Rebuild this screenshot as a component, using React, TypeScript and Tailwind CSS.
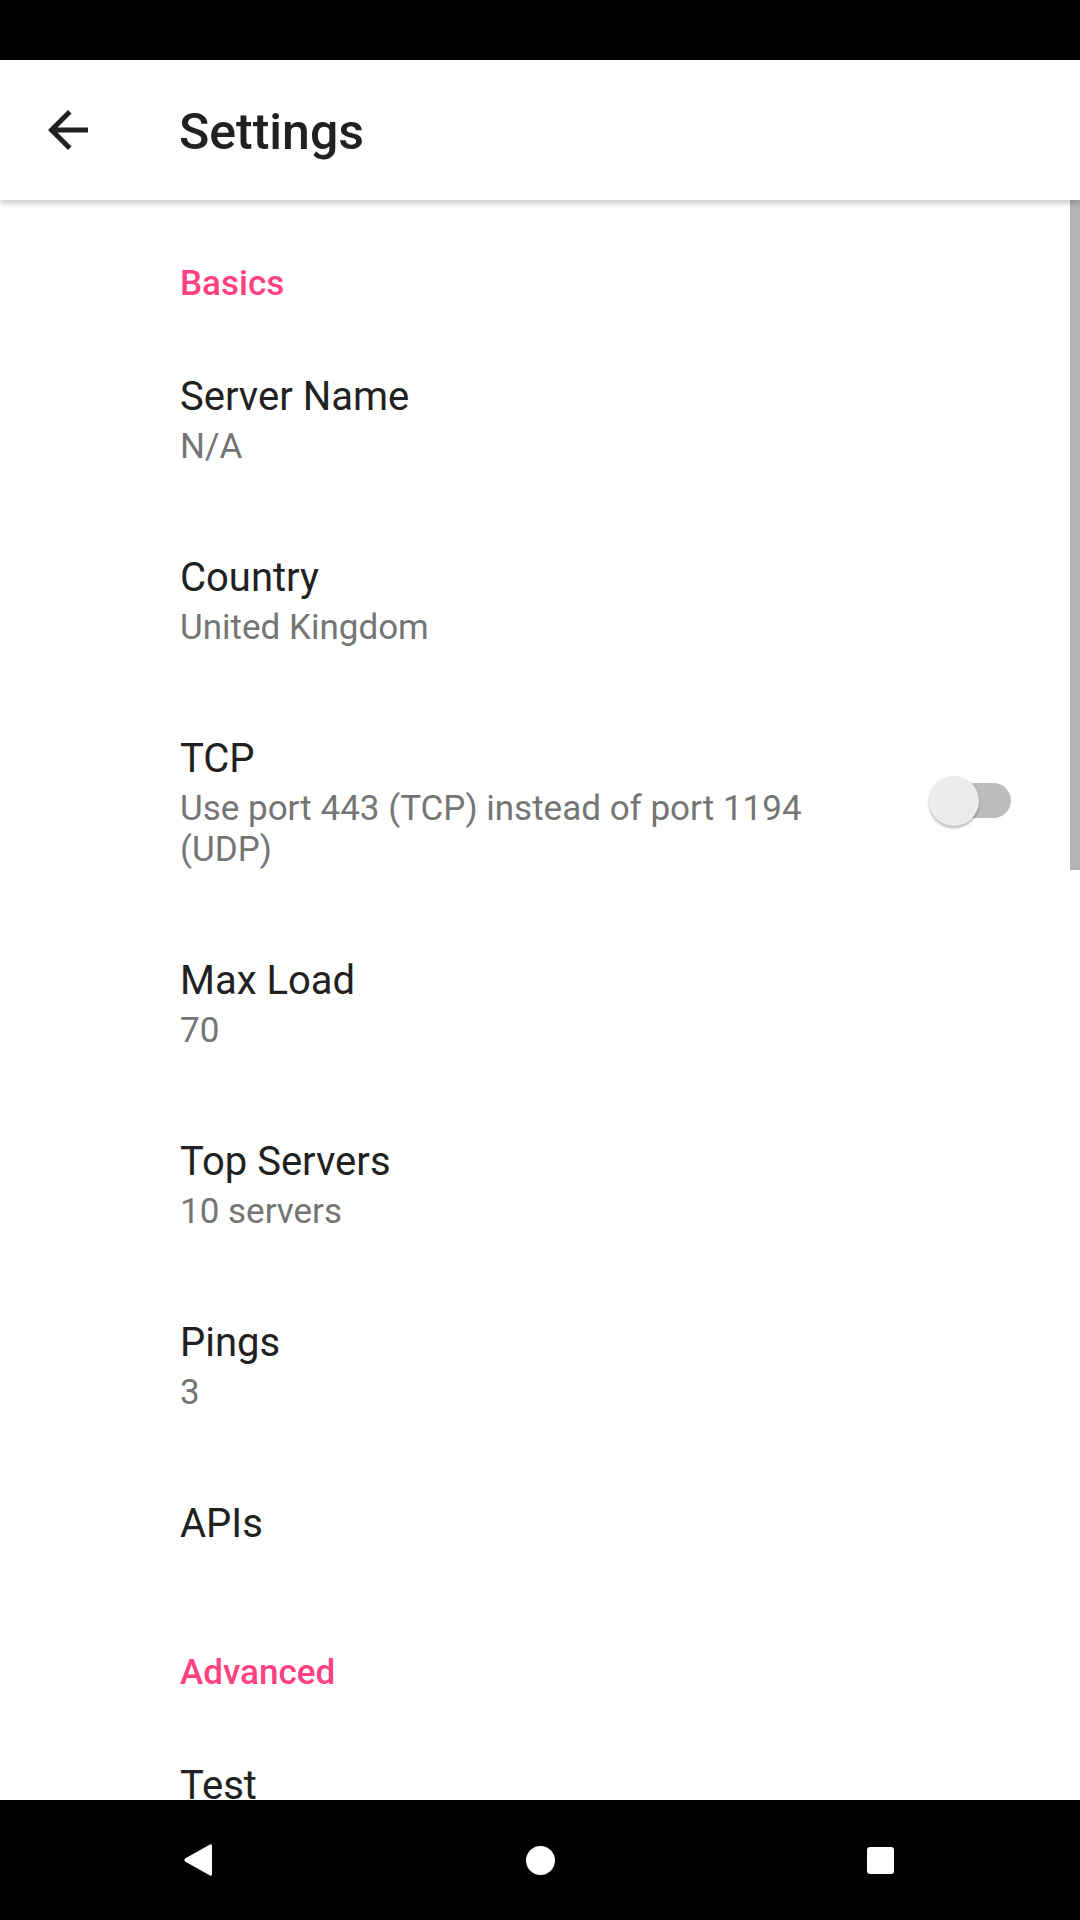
import React from "react"

type Pref = { title: string; summary?: string; toggle?: boolean }

const basics: Pref[] = [
    { title: "Server Name", summary: "N/A" },
    { title: "Country", summary: "United Kingdom" },
    { title: "TCP", summary: "Use port 443 (TCP) instead of port 1194 (UDP)", toggle: true },
    { title: "Max Load", summary: "70" },
    { title: "Top Servers", summary: "10 servers" },
    { title: "Pings", summary: "3" },
]

function Toggle() {
    return (
        <div className="relative w-[85px] h-[50px] mb-[4px] shrink-0 flex items-center">
            <div className="absolute left-[7px] w-[75px] h-[35px] rounded-full bg-[#bdbdbd]" />
            <div className="absolute left-0 w-[50px] h-[50px] rounded-full bg-[#ececec] shadow-[0_2px_3px_rgba(0,0,0,0.3)]" />
        </div>
    )
}

function Row({ pref }: { pref: Pref }) {
    return (
        <div className="flex items-center pl-[180px] pr-[66px] pt-[45px] pb-[42px]">
            <div className="w-[700px]">
                <div className="text-[40px] leading-[47px] text-[#212121]">{pref.title}</div>
                {pref.summary && (
                    <div className="mt-[6px] text-[35px] leading-[41px] text-[#757575]">{pref.summary}</div>
                )}
            </div>
            <div className="flex-1" />
            {pref.toggle && <Toggle />}
        </div>
    )
}

function Category({ label, top }: { label: string; top: string }) {
    return (
        <div className={`pl-[180px] pb-[24px] text-[35px] leading-[41px] font-medium text-[#ff4081] ${top}`}>
            {label}
        </div>
    )
}

export default function App() {
    return (
        <div className="w-[1080px] h-[1920px] flex flex-col bg-white overflow-hidden" style={{ fontFamily: "Roboto, sans-serif" }}>
            <div className="h-[60px] bg-black shrink-0" />
            <div className="relative z-10 h-[140px] shrink-0 bg-white flex items-center shadow-[0_3px_6px_rgba(0,0,0,0.22)]">
                <svg className="ml-[38px] w-[60px] h-[60px]" viewBox="0 0 24 24" fill="#212121">
                    <path d="M20 11H7.83l5.59-5.59L12 4l-8 8 8 8 1.41-1.41L7.83 13H20v-2z" />
                </svg>
                <div className="ml-[81px] pt-[4px] text-[50px] leading-[59px] font-medium text-[#212121]">Settings</div>
            </div>
            <div className="relative flex-1 overflow-hidden">
                <Category label="Basics" top="pt-[63px]" />
                {basics.map((p) => <Row key={p.title} pref={p} />)}
                <div className="pl-[180px] pt-[45px] pb-[81px] text-[40px] leading-[47px] text-[#212121]">APIs</div>
                <Category label="Advanced" top="pt-[24px]" />
                <div className="pl-[180px] pt-[45px] text-[40px] leading-[47px] text-[#212121]">Test</div>
                <div className="absolute right-0 top-0 w-[10px] h-[670px] bg-[#b4b4b4]" />
            </div>
            <div className="h-[120px] shrink-0 bg-black flex items-center">
                <div className="w-[360px] flex justify-center">
                    <svg className="ml-[36px] w-[30px] h-[34px]" viewBox="0 0 30 34" fill="white">
                        <path d="M27 1.5 Q29 0.5 29 3 L29 31 Q29 33.5 27 32.5 L2 18.5 Q0.5 17 2 15.5 Z" />
                    </svg>
                </div>
                <div className="w-[360px] flex justify-center">
                    <div className="w-[29px] h-[29px] rounded-full bg-white" />
                </div>
                <div className="w-[360px] flex justify-center">
                    <div className="mr-[40px] w-[27px] h-[27px] rounded-[3px] bg-white" />
                </div>
            </div>
        </div>
    )
}
